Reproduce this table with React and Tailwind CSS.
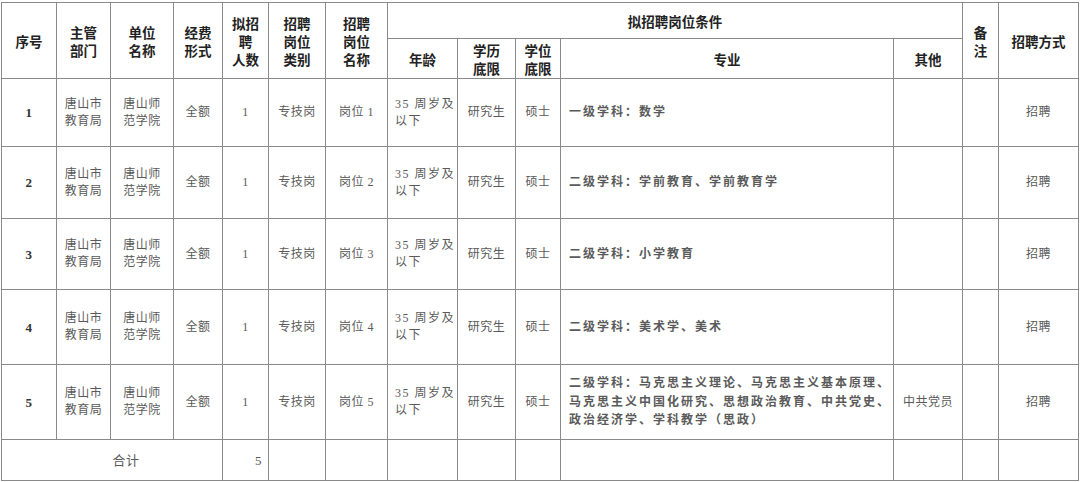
import React from 'react';

const widths = [55, 54, 63, 49, 46, 57, 62, 70, 58, 45, 333, 69, 36, 80];

const posts = [
  { no: 1, post: '岗位 1', major: ['一级学科：数学'], other: '', h: 'h-[68px]' },
  { no: 2, post: '岗位 2', major: ['二级学科：学前教育、学前教育学'], other: '', h: 'h-[72px]' },
  { no: 3, post: '岗位 3', major: ['二级学科：小学教育'], other: '', h: 'h-[71px]' },
  { no: 4, post: '岗位 4', major: ['二级学科：美术学、美术'], other: '', h: 'h-[75px]' },
  {
    no: 5,
    post: '岗位 5',
    major: [
      '二级学科：马克思主义理论、马克思主义基本原理、',
      '马克思主义中国化研究、思想政治教育、中共党史、',
      '政治经济学、学科教学（思政）',
    ],
    other: '中共党员',
    h: 'h-[75px]',
  },
];

const th = 'border border-[#8a8a8a] font-bold text-[13.5px] leading-[18px] text-[#222] text-center align-middle p-0';
const td = 'border border-[#8a8a8a] text-[12px] leading-[17px] text-[#5a5a5a] text-center align-middle p-0 tracking-[0.5px]';

const App = () => {
  return (
    <div className="w-[1080px] h-[482px] bg-white pt-[2px] pl-[1px] overflow-hidden">
      <table
        className="table-fixed border-collapse w-[1077px]"
        style={{ fontFamily: '"Liberation Serif", "Noto Sans CJK SC", serif' }}
      >
        <colgroup>
          {widths.map((w, i) => (
            <col key={i} style={{ width: w }} />
          ))}
        </colgroup>
        <thead style={{ fontFamily: '"Noto Sans CJK SC", sans-serif' }}>
          <tr className="h-[36px]">
            <th rowSpan={2} className={th}>序号</th>
            <th rowSpan={2} className={th}>主管<br />部门</th>
            <th rowSpan={2} className={th}>单位<br />名称</th>
            <th rowSpan={2} className={th}>经费<br />形式</th>
            <th rowSpan={2} className={`${th} leading-[17px]`}>拟招<br />聘<br />人数</th>
            <th rowSpan={2} className={`${th} leading-[17px]`}>招聘<br />岗位<br />类别</th>
            <th rowSpan={2} className={`${th} leading-[17px]`}>招聘<br />岗位<br />名称</th>
            <th colSpan={5} className={th}>拟招聘岗位条件</th>
            <th rowSpan={2} className={th}>备<br />注</th>
            <th rowSpan={2} className={th}>招聘方式</th>
          </tr>
          <tr className="h-[40px]">
            <th className={th}>年龄</th>
            <th className={th}>学历<br />底限</th>
            <th className={th}>学位<br />底限</th>
            <th className={th}>专业</th>
            <th className={th}>其他</th>
          </tr>
        </thead>
        <tbody>
          {posts.map((p) => (
            <tr key={p.no} className={p.h}>
              <td className={`${td} font-bold text-[13px] text-[#333]`}>{p.no}</td>
              <td className={td}>唐山市<br />教育局</td>
              <td className={td}>唐山师<br />范学院</td>
              <td className={td}>全额</td>
              <td className={td}>1</td>
              <td className={td}>专技岗</td>
              <td className={td}>{p.post}</td>
              <td className={`${td} text-left pl-[7px] tracking-[1.5px]`}>35 周岁及<br />以下</td>
              <td className={td}>研究生</td>
              <td className={td}>硕士</td>
              <td className={`${td} text-left pl-[8px] text-[#2a2a2a] font-semibold tracking-[2px] leading-[18.5px]`}>
                {p.major.map((m, i) => (
                  <div key={i}>{m}</div>
                ))}
              </td>
              <td className={td}>{p.other}</td>
              <td className={td}></td>
              <td className={td}>招聘</td>
            </tr>
          ))}
          <tr className="h-[41px]">
            <td colSpan={4} className={`${td} pl-[28px] text-[13px]`}>合计</td>
            <td className={`${td} text-right pr-[6px] text-[13px]`}>5</td>
            <td className={td}></td>
            <td className={td}></td>
            <td className={td}></td>
            <td className={td}></td>
            <td className={td}></td>
            <td className={td}></td>
            <td className={td}></td>
            <td className={td}></td>
            <td className={td}></td>
          </tr>
        </tbody>
      </table>
    </div>
  );
};

export default App;
